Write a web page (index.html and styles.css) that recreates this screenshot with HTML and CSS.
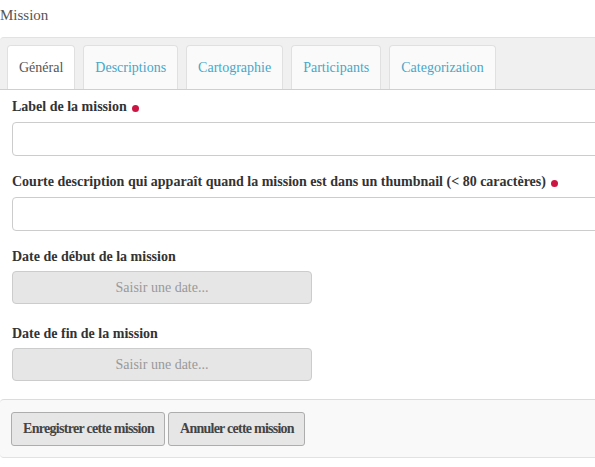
FILE: index.html
```html
<!DOCTYPE html>
<html lang="fr">
<head>
<meta charset="utf-8">
<title>Mission</title>
<link rel="stylesheet" href="styles.css">
</head>
<body>
<div class="page">
  <div class="title">Mission</div>
  <div class="tabs">
    <div class="tab active">Général</div>
    <div class="tab">Descriptions</div>
    <div class="tab">Cartographie</div>
    <div class="tab">Participants</div>
    <div class="tab">Categorization</div>
  </div>
  <div class="form">
    <label class="label">Label de la mission <span class="req"></span></label>
    <input class="input" type="text">
    <label class="label">Courte description qui apparaît quand la mission est dans un thumbnail (&lt; 80 caractères) <span class="req"></span></label>
    <input class="input" type="text">
    <label class="label date-label">Date de début de la mission</label>
    <div class="date">Saisir une date...</div>
    <label class="label date-label second">Date de fin de la mission</label>
    <div class="date">Saisir une date...</div>
  </div>
  <div class="footer">
    <button class="btn">Enregistrer cette mission</button>
    <button class="btn narrow">Annuler cette mission</button>
  </div>
</div>
</body>
</html>
```

FILE: styles.css
```css
html, body {
  margin: 0;
  padding: 0;
  background: #fff;
  overflow: hidden;
}
body {
  font-family: "Liberation Serif", "Times New Roman", serif;
  font-size: 14px;
  color: #333;
}
.page {
  width: 640px;
}
.title {
  font-size: 15px;
  color: #555;
  line-height: 20px;
  padding: 5px 0 0 0;
  height: 37px;
  box-sizing: border-box;
}
.tabs {
  display: flex;
  gap: 8px;
  background: #f0f0f0;
  border-top: 1px solid #e2e2e2;
  border-bottom: 1px solid #cfcfcf;
  padding: 7px 0 0 7px;
  border-radius: 4px 0 0 0;
  height: 53px;
  box-sizing: border-box;
}
.tab {
  background: #fafafa;
  border: 1px solid #e0e0e0;
  border-bottom: none;
  border-radius: 4px 4px 0 0;
  color: #47a7c8;
  padding: 0 11px;
  line-height: 44px;
}
.tab.active {
  background: #fff;
  color: #555;
}
.form {
  display: flex;
  flex-direction: column;
  padding: 7px 0 0 12px;
}
.label {
  font-weight: bold;
  line-height: 20px;
  margin-bottom: 5px;
  display: flex;
  align-items: center;
  gap: 5px;
}
.req {
  display: inline-block;
  width: 7px;
  height: 7px;
  border-radius: 50%;
  background: #cc1542;
  margin-top: 3px;
}
.input {
  height: 34px;
  box-sizing: border-box;
  border: 1px solid #cccccc;
  border-radius: 4px;
  background: #fff;
  margin: 0 0 16px 0;
  width: 620px;
  font: inherit;
}
.date-label {
  margin-bottom: 4px;
}
.date-label.second {
  margin-top: 20px;
}
.date {
  width: 300px;
  height: 33px;
  box-sizing: border-box;
  background: #e6e6e6;
  border: 1px solid #cccccc;
  border-radius: 4px;
  color: #999;
  display: flex;
  align-items: center;
  justify-content: center;
}
.footer {
  margin-top: 18px;
  background: #f9f9f9;
  border-top: 1px solid #dcdcdc;
  border-bottom: 1px solid #e2e2e2;
  border-radius: 4px;
  padding: 12px 11px 11px 11px;
  display: flex;
  gap: 3px;
}
.btn {
  font-family: inherit;
  font-size: 14px;
  font-weight: bold;
  letter-spacing: -0.7px;
  color: #444;
  background: #e6e6e6;
  border: 1px solid #adadad;
  border-radius: 3px;
  height: 34px;
  padding: 0 10px 0 11px;
}
.btn.narrow {
  letter-spacing: -0.75px;
}
```
